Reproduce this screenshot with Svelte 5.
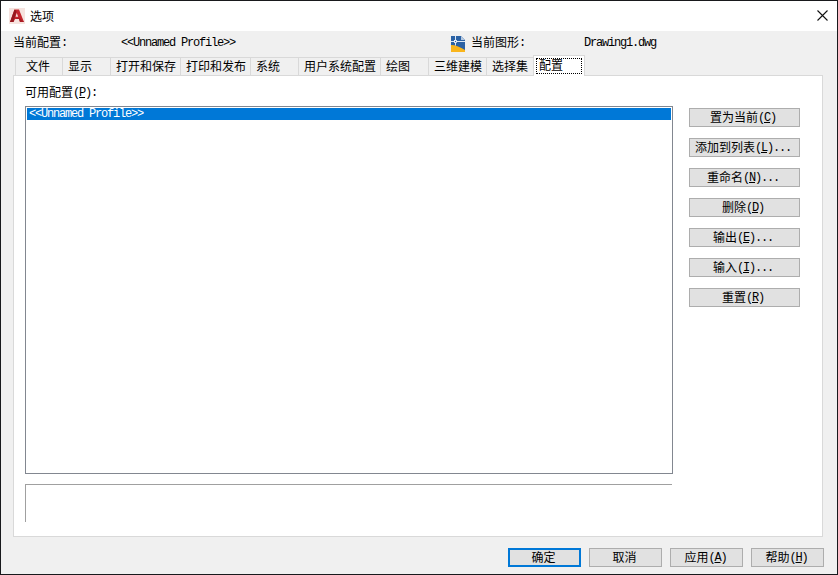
<script>
  const tabs = [
    { label: '文件', width: 47 },
    { label: '显示', width: 48 },
    { label: '打开和保存', width: 70 },
    { label: '打印和发布', width: 70 },
    { label: '系统', width: 48 },
    { label: '用户系统配置', width: 82 },
    { label: '绘图', width: 48 },
    { label: '三维建模', width: 58 },
    { label: '选择集', width: 47 },
    { label: '配置', width: 52, active: true }
  ];
  const actions = [
    { label: '置为当前', key: 'C' },
    { label: '添加到列表', key: 'L', more: true },
    { label: '重命名', key: 'N', more: true },
    { label: '删除', key: 'D' },
    { label: '输出', key: 'E', more: true },
    { label: '输入', key: 'I', more: true },
    { label: '重置', key: 'R' }
  ];
  const footer = [
    { label: '确定', primary: true },
    { label: '取消' },
    { label: '应用', key: 'A' },
    { label: '帮助', key: 'H' }
  ];
</script>

{#snippet caption(item)}
  <span class="cap">{item.label}{#if item.key}<span class="mono raised">(<u>{item.key}</u>){item.more ? '...' : ''}</span>{/if}</span>
{/snippet}

<div class="window">
  <header class="title">
    <svg class="logo" width="16" height="16" viewBox="0 0 16 16">
      <rect width="16" height="16" fill="#f6e3df" />
      <path d="M1 14 5.5 1.5H10L15 14H11L10 11H6L4.5 14Z" fill="#c4262e" />
      <path d="M1 14 5.5 1.5 7.5 3 4.5 14Z" fill="#96191f" />
      <path d="M7.7 5 6.6 8.7H9.2Z" fill="#f6e3df" />
      <path d="M6 10.8 10 9.5 15 14H11L10 11Z" fill="#a91d24" />
    </svg>
    <span class="name">选项</span>
    <svg class="close" width="11" height="11" viewBox="0 0 11 11">
      <path d="M.5 .5 10.5 10.5M10.5 .5 .5 10.5" stroke="#111" stroke-width="1.1" />
    </svg>
  </header>

  <div class="info">
    <span class="profile-label">当前配置<span class="mono raised">:</span></span>
    <span class="mono profile">&lt;&lt;Unnamed Profile&gt;&gt;</span>
    <svg class="dwg" width="14" height="16" viewBox="0 0 14 16">
      <path d="M0 0H10L14 4V16H0Z" fill="#2b62a5" />
      <path d="M10 0 14 4H10Z" fill="#b7c9df" />
      <path d="M0 9C5 9 9 11 14 14V16H0Z" fill="#f9b51c" />
      <path d="M0 5.5H14M4.5 0V9.5" stroke="#dce8f5" stroke-width="1" />
      <rect x="3.5" y="4.5" width="2" height="2" fill="#2b62a5" stroke="#fff" stroke-width=".8" />
    </svg>
    <span class="drawing-label">当前图形<span class="mono raised">:</span></span>
    <span class="mono">Drawing1.dwg</span>
  </div>

  <nav class="tabs">
    {#each tabs as tab}
      <div class="tab" class:active={tab.active} style:width="{tab.width}px"><span>{tab.label}</span></div>
    {/each}
  </nav>

  <main class="panel">
    <div class="left">
      <div class="list-label">可用配置<span class="mono raised">(<u>P</u>):</span></div>
      <div class="list"><div class="row mono">&lt;&lt;Unnamed Profile&gt;&gt;</div></div>
      <div class="description"></div>
    </div>
    <div class="actions">
      {#each actions as item}
        <button>{@render caption(item)}</button>
      {/each}
    </div>
  </main>

  <footer>
    {#each footer as item}
      <button class:primary={item.primary}>{@render caption(item)}</button>
    {/each}
  </footer>
</div>

<style>
  :global(body) { margin: 0; }
  .window, .window * { box-sizing: border-box; }
  .window {
    width: 838px;
    height: 575px;
    border: 1px solid #18191c;
    background: #f0f0f0;
    color: #000;
    font: 12px/14px "Noto Sans CJK SC", sans-serif;
    white-space: nowrap;
    overflow: hidden;
    display: flex;
    flex-direction: column;
  }
  .mono {
    font-family: "Liberation Mono", monospace;
    font-size: 12px;
    letter-spacing: -1.201px;
    line-height: 12px;
  }
  .raised { vertical-align: 1px; }
  u { text-decoration: underline; text-underline-offset: 1px; text-decoration-thickness: 1px; }
  .title {
    height: 30px;
    flex: none;
    background: #fff;
    display: flex;
    align-items: center;
    padding: 0 9px 0 8px;
  }
  .logo { margin-top: -1px; }
  .close { margin-top: -1px; }
  .name { margin: -1px 0 0 5px; flex: 1; }
  .info {
    height: 26px;
    flex: none;
    display: flex;
    align-items: center;
    padding: 0 0 3px 12px;
  }
  .dwg { margin-top: 2px; }
  .profile-label { width: 108px; }
  .profile { width: 330px; }
  .drawing-label { margin-left: 6px; width: 113px; }
  .profile-label, .drawing-label { padding-bottom: 1px; }
  .tabs {
    display: flex;
    align-items: flex-end;
    height: 20px;
    flex: none;
    margin: -1px 0 -1px 14px;
    z-index: 1;
  }
  .tab {
    height: 19px;
    border: 1px solid #d9d9d9;
    border-right: 0;
    padding: 1px 0 0 5px;
  }
  .tab:first-child { padding-left: 10px; }
  .tab.active {
    height: 21px;
    background: #fff;
    border-right: 1px solid #d9d9d9;
    border-bottom: 0;
    padding: 2px 2px 2px;
  }
  .tab.active span {
    display: block;
    height: 16px;
    width: 46px;
    line-height: 12px;
    padding-left: 2px;
    border: 1px dotted #000;
  }
  .panel {
    width: 810px;
    height: 462px;
    flex: none;
    margin-left: 12px;
    border: 1px solid #d9d9d9;
    background: #fff;
    display: flex;
    padding-left: 11px;
  }
  .left { width: 648px; }
  .list-label { height: 30px; padding-top: 9px; }
  .list {
    height: 368px;
    border: 1px solid #828790;
    padding: 1px;
  }
  .row {
    height: 12px;
    padding-left: 2px;
    background: #0078d7;
    color: #fff;
  }
  .description {
    margin: 10px 1px 0 0;
    height: 38px;
    border: solid #a0a0a0;
    border-width: 1px 0 0 1px;
  }
  .actions {
    display: flex;
    flex-direction: column;
    gap: 11px;
    padding: 32px 0 0 16px;
  }
  button {
    display: flex;
    align-items: center;
    justify-content: center;
    width: 111px;
    height: 19px;
    flex: none;
    padding: 0;
    border: 1px solid #adadad;
    border-radius: 0;
    background: #e1e1e1;
    color: #000;
    font: inherit;
  }
  .cap { margin-left: -3px; padding-bottom: 2px; }
  footer {
    display: flex;
    gap: 8px;
    padding: 11px 0 0 507px;
  }
  footer button { width: 73px; }
  footer .cap { margin-left: -2px; }
  .primary { border: 2px solid #0078d7; }
</style>
